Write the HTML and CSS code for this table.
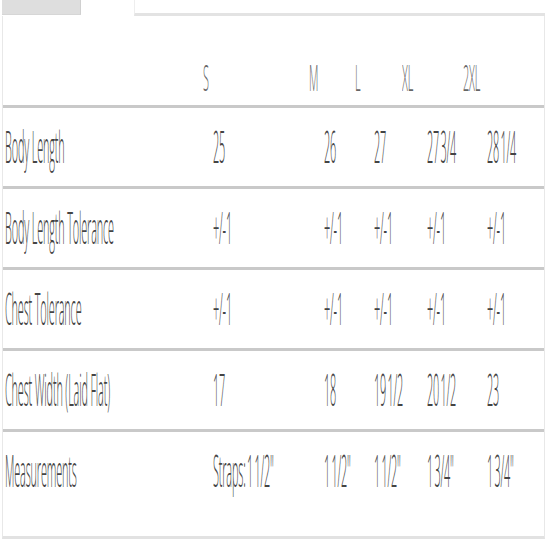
FILE: index.html
```html
<!DOCTYPE html>
<html>
<head>
<meta charset="utf-8">
<link rel="stylesheet" href="styles.css">
</head>
<body>
<div class="tabs">
  <div class="tab"></div>
  <div class="tab-gap"></div>
  <div class="tab-line"></div>
</div>
<div class="table">
  <div class="row head">
    <div class="c"></div>
    <div class="c"><span class="t">S</span></div>
    <div class="c"><span class="t">M</span></div>
    <div class="c"><span class="t">L</span></div>
    <div class="c"><span class="t">XL</span></div>
    <div class="c"><span class="t">2XL</span></div>
  </div>
  <div class="row data">
    <div class="c"><span class="t label">Body Length</span></div>
    <div class="c"><span class="t">25</span></div>
    <div class="c"><span class="t">26</span></div>
    <div class="c"><span class="t">27</span></div>
    <div class="c"><span class="t">27 3/4</span></div>
    <div class="c"><span class="t">28 1/4</span></div>
  </div>
  <div class="row data">
    <div class="c"><span class="t label">Body Length Tolerance</span></div>
    <div class="c"><span class="t">+/-1</span></div>
    <div class="c"><span class="t">+/-1</span></div>
    <div class="c"><span class="t">+/-1</span></div>
    <div class="c"><span class="t">+/-1</span></div>
    <div class="c"><span class="t">+/-1</span></div>
  </div>
  <div class="row data">
    <div class="c"><span class="t label">Chest Tolerance</span></div>
    <div class="c"><span class="t">+/-1</span></div>
    <div class="c"><span class="t">+/-1</span></div>
    <div class="c"><span class="t">+/-1</span></div>
    <div class="c"><span class="t">+/-1</span></div>
    <div class="c"><span class="t">+/-1</span></div>
  </div>
  <div class="row data">
    <div class="c"><span class="t label">Chest Width (Laid Flat)</span></div>
    <div class="c"><span class="t">17</span></div>
    <div class="c"><span class="t">18</span></div>
    <div class="c"><span class="t">19 1/2</span></div>
    <div class="c"><span class="t">20 1/2</span></div>
    <div class="c"><span class="t">23</span></div>
  </div>
  <div class="row data last">
    <div class="c"><span class="t label">Measurements</span></div>
    <div class="c"><span class="t">Straps: 1 1/2"</span></div>
    <div class="c"><span class="t">1 1/2"</span></div>
    <div class="c"><span class="t">1 1/2"</span></div>
    <div class="c"><span class="t">1 3/4"</span></div>
    <div class="c"><span class="t">1 3/4"</span></div>
  </div>
</div>
</body>
</html>
```

FILE: styles.css
```css
html, body {
  margin: 0;
  padding: 0;
  background: #ffffff;
}
body {
  width: 550px;
  height: 550px;
  overflow: hidden;
  font-family: "Open Sans", "Liberation Sans", sans-serif;
  color: #444444;
}
.tabs {
  display: flex;
  height: 16px;
  padding-left: 2px;
}
.tab {
  width: 79px;
  height: 15px;
  background: #dedede;
  border-right: 1px solid #d0d0d0;
  border-bottom: 1px solid #d6d6d6;
  box-sizing: border-box;
}
.tab-gap {
  width: 53px;
}
.tab-line {
  width: 411px;
  height: 16px;
  border-bottom: 3px solid #e3e3e3;
  border-left: 1px solid #eeeeee;
  box-sizing: border-box;
}
.table {
  margin-left: 2px;
  width: 543px;
  box-sizing: border-box;
  border-left: 1px solid #e8e8e8;
  border-right: 1px solid #e8e8e8;
  border-bottom: 3px solid #e2e2e2;
}
.row {
  display: grid;
  padding-left: 2px;
  border-bottom: 3px solid #c9c9c9;
  box-sizing: border-box;
}
.row.head {
  grid-template-columns: 198px 106px 46px 47px 61px minmax(0, 1fr);
  height: 92px;
  align-items: end;
  padding-bottom: 10px;
}
.row.data {
  grid-template-columns: 208px 111px 50px 53px 60px minmax(0, 1fr);
  height: 81px;
  align-items: start;
  padding-top: 17px;
}
.row.last {
  height: 104px;
  border-bottom: none;
}
.c {
  white-space: nowrap;
  line-height: 40px;
  height: 40px;
  min-width: 0;
}
.t {
  display: inline-block;
  font-size: 10.9px;
  line-height: 14px;
  vertical-align: middle;
  font-weight: 300;
  transform: scale(1, 4);
  transform-origin: left center;
  letter-spacing: -0.16px;
  word-spacing: -1.3px;
}
.t.label {
  word-spacing: 0;
}
.head .t {
  color: #666666;
  transform: scale(1, 3.38);
}
```
